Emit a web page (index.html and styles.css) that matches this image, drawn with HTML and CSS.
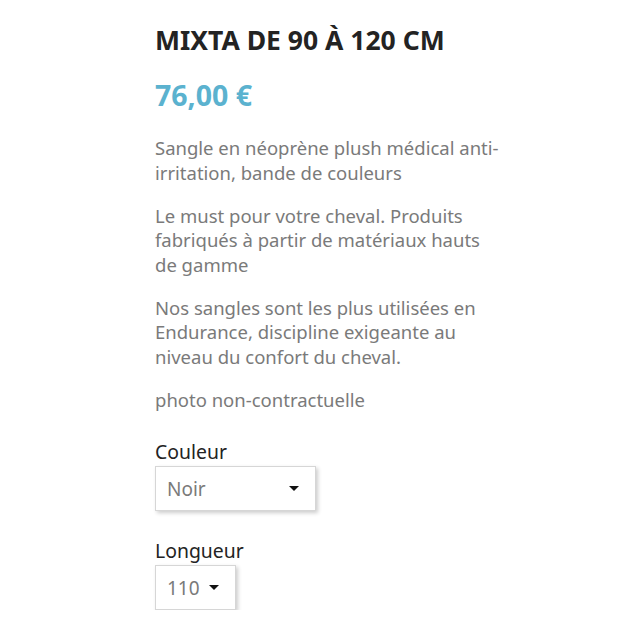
FILE: index.html
```html
<!DOCTYPE html>
<html lang="fr">
<head>
<meta charset="utf-8">
<link rel="stylesheet" href="styles.css">
</head>
<body>
<main class="product">
  <h1 class="title">MIXTA DE 90 À 120 CM</h1>
  <div class="price">76,00 €</div>
  <div class="desc">
    <p>Sangle en néoprène plush médical anti-irritation, bande de couleurs</p>
    <p>Le must pour votre cheval. Produits fabriqués à partir de matériaux hauts de gamme</p>
    <p>Nos sangles sont les plus utilisées en Endurance, discipline exigeante au niveau du confort du cheval.</p>
    <p>photo non-contractuelle</p>
  </div>
  <div class="variant">
    <div class="label">Couleur</div>
    <div class="select select-wide"><span class="value">Noir</span><span class="caret"></span></div>
  </div>
  <div class="variant">
    <div class="label">Longueur</div>
    <div class="select select-narrow"><span class="value">110</span><span class="caret"></span></div>
  </div>
</main>
</body>
</html>
```
FILE: styles.css
```css
html, body {
  margin: 0;
  padding: 0;
  background: #fff;
}
body {
  font-family: "Noto Sans", "Open Sans", sans-serif;
}
.product {
  width: 348px;
  padding: 22px 0 0 155px;
}
.title {
  margin: 0;
  font-size: 26.5px;
  font-weight: 700;
  color: #232323;
  line-height: 36px;
}
.price {
  margin-top: 19px;
  font-size: 28.5px;
  font-weight: 700;
  color: #5bb2cf;
  line-height: 36px;
}
.desc {
  margin-top: 23px;
  color: #7a7a7a;
  font-size: 18.5px;
  line-height: 24.5px;
}
.desc p {
  margin: 0 0 18.5px;
}
.desc p:last-child {
  margin-bottom: 0;
}
.variant {
  margin-top: 27px;
}
.variant + .variant {
  margin-top: 27px;
}
.label {
  font-size: 19.4px;
  color: #232323;
  line-height: 26px;
}
.select {
  display: flex;
  align-items: center;
  justify-content: space-between;
  box-sizing: border-box;
  height: 45px;
  margin-top: 1px;
  border: 1px solid #d6d6d6;
  box-shadow: 2px 2px 4px rgba(0,0,0,0.2);
  padding: 0 16px 0 11px;
  background: #fff;
}
.select-wide { width: 161px; }
.select-narrow { width: 81px; }
.value {
  font-size: 19px;
  color: #7a7a7a;
}
.caret {
  width: 0;
  height: 0;
  border-left: 5px solid transparent;
  border-right: 5px solid transparent;
  border-top: 5px solid #111;
}
```
